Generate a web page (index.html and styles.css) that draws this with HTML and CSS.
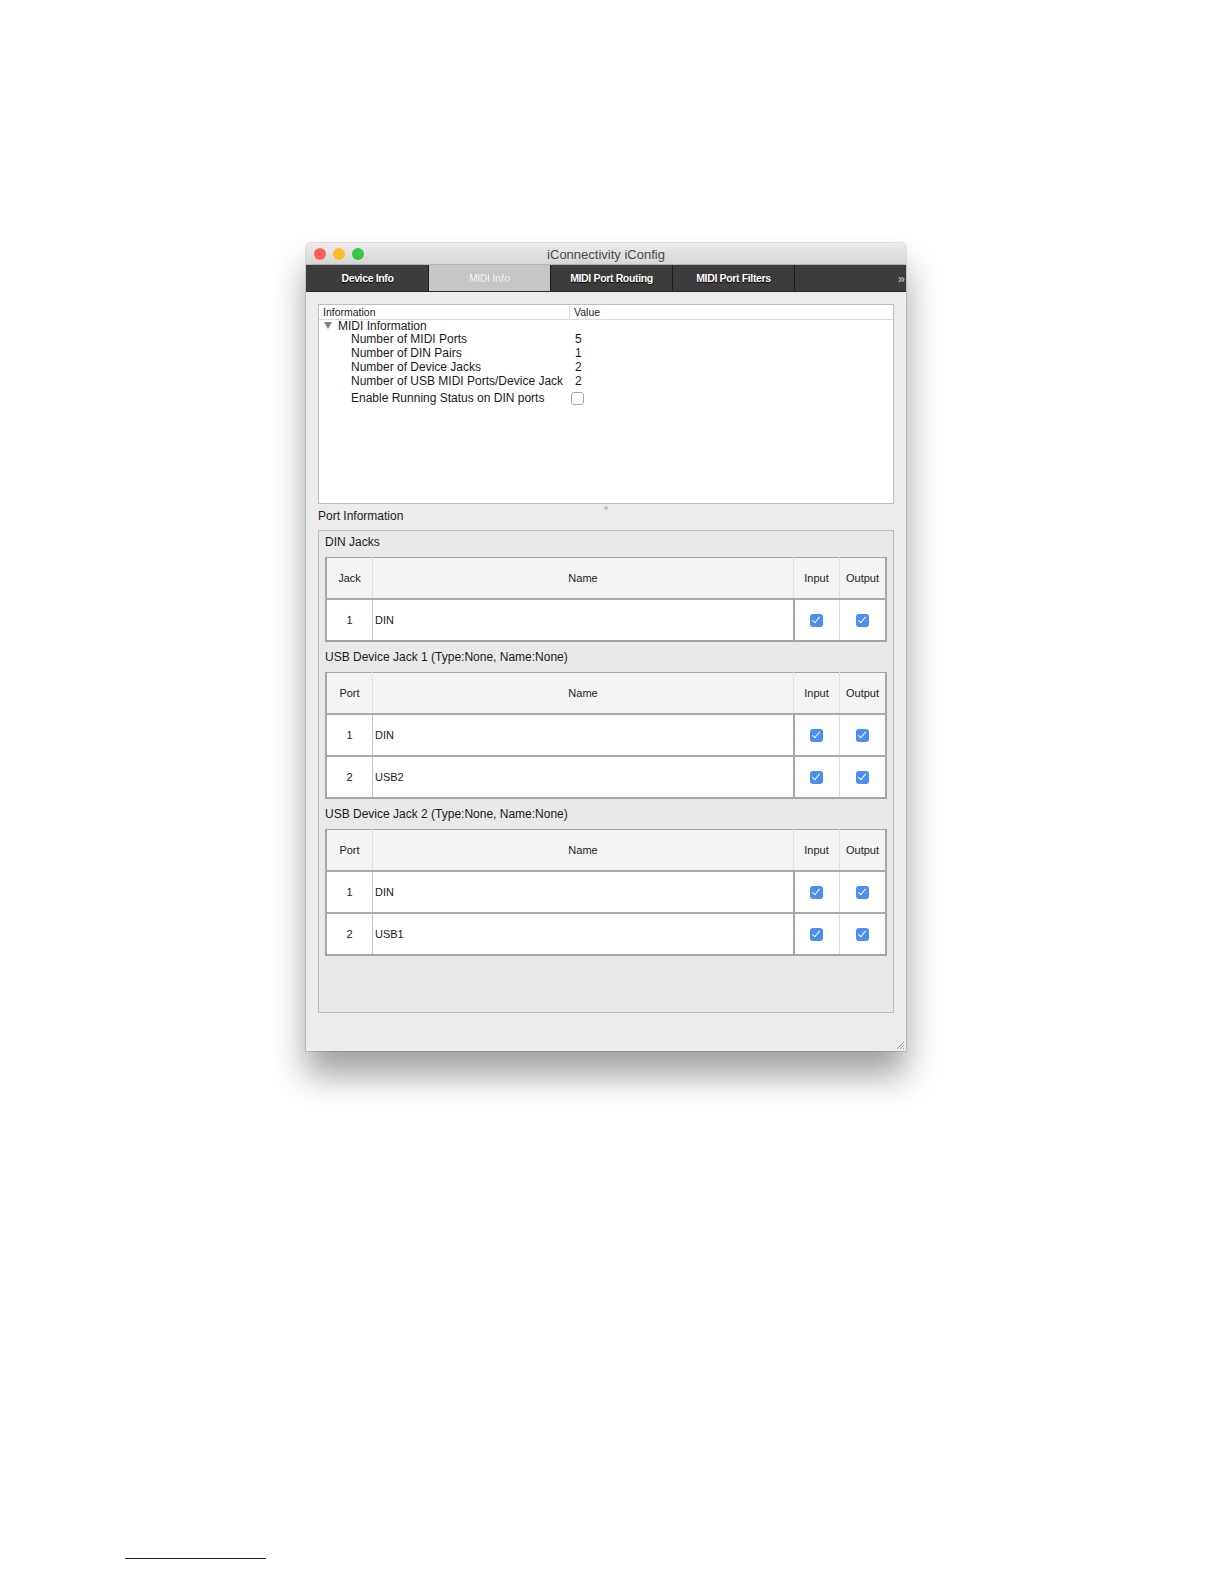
FILE: index.html
```html
<!DOCTYPE html>
<html lang="en">
<head>
    <meta charset="UTF-8">
    <title>iConnectivity iConfig - MIDI Info</title>
    <link rel="stylesheet" href="styles.css">
</head>
<body>

    <div class="page">
        <!-- Ventana de la aplicación -->
        <div class="window">
            <div class="titlebar">
                <div class="lights">
                    <span class="light red"></span>
                    <span class="light yellow"></span>
                    <span class="light green"></span>
                </div>
                <div class="title">iConnectivity iConfig</div>
            </div>

            <div class="tabs">
                <div class="tab">Device Info</div>
                <div class="tab active">MIDI Info</div>
                <div class="tab">MIDI Port Routing</div>
                <div class="tab">MIDI Port Filters</div>
                <div class="tab-rest">&raquo;</div>
            </div>

            <div class="content">
                <!-- Árbol de información -->
                <div class="tree">
                    <div class="tree-head">
                        <div class="col-info">Information</div>
                        <div class="col-value">Value</div>
                    </div>
                    <div class="tree-row parent">
                        <div class="col-info"><span class="arrow"></span>MIDI Information</div>
                    </div>
                    <div class="tree-row">
                        <div class="col-info">Number of MIDI Ports</div>
                        <div class="col-value">5</div>
                    </div>
                    <div class="tree-row">
                        <div class="col-info">Number of DIN Pairs</div>
                        <div class="col-value">1</div>
                    </div>
                    <div class="tree-row">
                        <div class="col-info">Number of Device Jacks</div>
                        <div class="col-value">2</div>
                    </div>
                    <div class="tree-row">
                        <div class="col-info">Number of USB MIDI Ports/Device Jack</div>
                        <div class="col-value">2</div>
                    </div>
                    <div class="tree-row check-row">
                        <div class="col-info">Enable Running Status on DIN ports</div>
                        <div class="col-value"><span class="box-empty"></span></div>
                    </div>
                </div>
                <div class="splitter"><span class="dot"></span></div>

                <div class="section-label">Port Information</div>

                <div class="group">
                    <div class="group-title first">DIN Jacks</div>
                    <table class="ports">
                        <tr>
                            <th class="c-num">Jack</th>
                            <th class="c-name">Name</th>
                            <th class="c-in">Input</th>
                            <th class="c-out">Output</th>
                        </tr>
                        <tr>
                            <td class="c-num">1</td>
                            <td class="c-name">DIN</td>
                            <td class="c-in"><span class="check"></span></td>
                            <td class="c-out"><span class="check"></span></td>
                        </tr>
                    </table>

                    <div class="group-title">USB Device Jack 1 (Type:None, Name:None)</div>
                    <table class="ports">
                        <tr>
                            <th class="c-num">Port</th>
                            <th class="c-name">Name</th>
                            <th class="c-in">Input</th>
                            <th class="c-out">Output</th>
                        </tr>
                        <tr>
                            <td class="c-num">1</td>
                            <td class="c-name">DIN</td>
                            <td class="c-in"><span class="check"></span></td>
                            <td class="c-out"><span class="check"></span></td>
                        </tr>
                        <tr>
                            <td class="c-num">2</td>
                            <td class="c-name">USB2</td>
                            <td class="c-in"><span class="check"></span></td>
                            <td class="c-out"><span class="check"></span></td>
                        </tr>
                    </table>

                    <div class="group-title">USB Device Jack 2 (Type:None, Name:None)</div>
                    <table class="ports">
                        <tr>
                            <th class="c-num">Port</th>
                            <th class="c-name">Name</th>
                            <th class="c-in">Input</th>
                            <th class="c-out">Output</th>
                        </tr>
                        <tr>
                            <td class="c-num">1</td>
                            <td class="c-name">DIN</td>
                            <td class="c-in"><span class="check"></span></td>
                            <td class="c-out"><span class="check"></span></td>
                        </tr>
                        <tr>
                            <td class="c-num">2</td>
                            <td class="c-name">USB1</td>
                            <td class="c-in"><span class="check"></span></td>
                            <td class="c-out"><span class="check"></span></td>
                        </tr>
                    </table>
                </div>

                <svg class="grip" width="10" height="10" viewBox="0 0 10 10">
                    <path d="M9 2 L2 9 M9 5 L5 9 M9 8 L8 9" stroke="#9a9a9a" stroke-width="1" fill="none"/>
                </svg>
            </div>
        </div>

        <!-- Línea de nota al pie -->
        <div class="footnote-rule"></div>
    </div>

</body>
</html>
```

FILE: styles.css
```css
/* Estilos generales */
body, html {
    margin: 0;
    padding: 0;
    background: #ffffff;
    font-family: "Liberation Sans", Arial, sans-serif;
    color: #1a1a1a;
}

.page {
    padding: 243px 0 0 306px;
}

/* Ventana */
.window {
    width: 600px;
    height: 808px;
    background: #ececec;
    border-radius: 5px 5px 0 0;
    box-shadow: 0 0 0 1px rgba(0, 0, 0, 0.12), 0 24px 34px rgba(0, 0, 0, 0.38);
    display: flex;
    flex-direction: column;
    overflow: hidden;
}

.titlebar {
    height: 21px;
    background: linear-gradient(#ececec, #d6d6d6);
    border-bottom: 1px solid #b4b4b4;
    position: relative;
    display: flex;
    align-items: center;
    justify-content: center;
}

.lights {
    position: absolute;
    left: 8px;
    top: 5px;
    display: flex;
    gap: 7px;
}

.light {
    width: 12px;
    height: 12px;
    border-radius: 50%;
    display: block;
}

.light.red { background: #fc5f57; }
.light.yellow { background: #fdbc2e; }
.light.green { background: #33c748; }

.title {
    font-size: 13px;
    color: #4a4a4a;
    padding-top: 1px;
}

/* Pestañas */
.tabs {
    height: 26px;
    background: #3c3c3c;
    display: flex;
    border-bottom: 1px solid #262626;
    padding-left: 1px;
}

.tab {
    width: 121px;
    border-right: 1px solid #1c1c1c;
    display: flex;
    align-items: center;
    justify-content: center;
    font-size: 10.5px;
    font-weight: bold;
    color: #ffffff;
    text-shadow: 0 1px 1px #000;
    letter-spacing: -0.35px;
}

.tab.active {
    background: #c6c6c6;
    color: #eeeeee;
    text-shadow: 0 0 1px #9a9a9a;
}

.tab-rest {
    flex: 1;
    display: flex;
    align-items: center;
    justify-content: flex-end;
    padding-right: 1px;
    color: #a8a8a8;
    font-size: 13px;
    font-weight: bold;
}

/* Contenido */
.content {
    flex: 1;
    padding: 12px 12px 0 12px;
    position: relative;
}

.tree {
    height: 198px;
    background: #ffffff;
    border: 1px solid #bdbdbd;
}

.tree-head {
    display: flex;
    height: 14px;
    border-bottom: 1px solid #dcdcdc;
    font-size: 10.5px;
    line-height: 14px;
}

.tree-head .col-info {
    width: 246px;
    padding-left: 4px;
    border-right: 1px solid #dcdcdc;
}

.tree-head .col-value {
    padding-left: 4px;
}

.tree-row {
    display: flex;
    height: 14px;
    font-size: 12px;
    line-height: 14px;
}

.tree-row.parent {
    height: 13px;
    margin-top: -1px;
    line-height: 14px;
}

.tree-row .col-info {
    width: 222px;
    padding-left: 32px;
    white-space: nowrap;
}

.tree-row.parent .col-info {
    padding-left: 5px;
    width: 249px;
    display: flex;
    align-items: center;
}

.tree-row .col-value {
    padding-left: 2px;
}

.arrow {
    width: 0;
    height: 0;
    border-left: 4px solid transparent;
    border-right: 4px solid transparent;
    border-top: 7px solid #808080;
    margin-right: 6px;
}

.tree-row.check-row {
    height: 18px;
    line-height: 18px;
    margin-top: 1px;
}

.box-empty {
    display: block;
    width: 11px;
    height: 11px;
    margin-top: 3px;
    margin-left: -4px;
    border: 1px solid #a6a6a6;
    border-radius: 3px;
    background: #ffffff;
}

.splitter {
    height: 0;
    position: relative;
}

.dot {
    position: absolute;
    left: 286px;
    top: 2px;
    width: 4px;
    height: 4px;
    border-radius: 50%;
    background: #c4c4c4;
}

.section-label {
    font-size: 12px;
    line-height: 15px;
    padding-top: 5px;
    margin-bottom: 6px;
}

/* Grupo de puertos */
.group {
    height: 481px;
    border: 1px solid #bcbcbc;
    background: #e9e9e9;
    padding: 0 6px;
}

.group-title {
    font-size: 12px;
    line-height: 15px;
    padding: 8px 0 7px;
}

.group-title.first {
    padding: 4px 0 7px;
}

.ports {
    width: 562px;
    border-collapse: collapse;
    table-layout: fixed;
    border: 2px solid #a4a4a4;
    border-top-width: 1px;
    font-size: 11px;
}

.ports th {
    height: 40px;
    background: #f4f4f4;
    font-weight: normal;
    color: #222;
    border-right: 1px solid #e2e2e2;
    padding: 0;
}

.ports td {
    height: 40px;
    background: #ffffff;
    border-top: 2px solid #aaaaaa;
    padding: 0;
    text-align: center;
}

.ports .c-num { width: 45px; }
.ports .c-in { width: 45px; }
.ports .c-out { width: 45px; }

.ports td.c-num {
    border-right: 1px solid #c4c4c4;
}

.ports td.c-name {
    text-align: left;
    padding-left: 2px;
    border-right: 2px solid #a6a6a6;
}

.ports th.c-name {
    border-right: 1px solid #e2e2e2;
}

.ports td.c-in {
    border-right: 1px solid #dadada;
}

.check {
    display: inline-block;
    width: 13px;
    height: 13px;
    border-radius: 3px;
    background: #4a8ff0;
    position: relative;
    vertical-align: middle;
}

.check::after {
    content: "";
    position: absolute;
    left: 4px;
    top: 1px;
    width: 3px;
    height: 7px;
    border-right: 1.5px solid #ffffff;
    border-bottom: 1.5px solid #ffffff;
    transform: rotate(40deg);
}

.grip {
    position: absolute;
    right: 1px;
    bottom: 1px;
}

/* Línea de nota al pie */
.footnote-rule {
    margin: 507px 0 0 -181px;
    width: 141px;
    height: 1px;
    background: #222222;
}
```
